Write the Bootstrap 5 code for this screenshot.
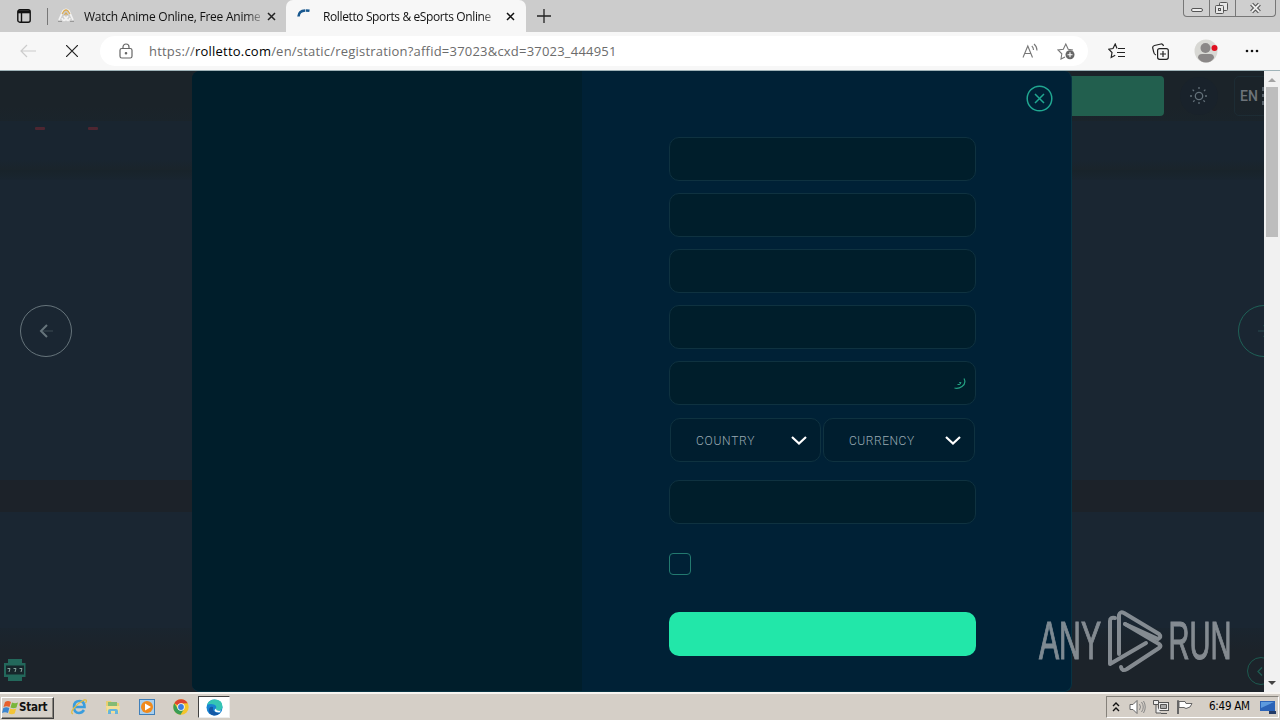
<!DOCTYPE html>
<html lang="en">
<head>
<meta charset="utf-8">
<title>Rolletto Sports &amp; eSports Online</title>
<link rel="stylesheet" href="https://cdn.jsdelivr.net/npm/bootstrap@5.3.0/dist/css/bootstrap.min.css">
<script src="https://cdn.jsdelivr.net/npm/bootstrap@5.3.0/dist/js/bootstrap.bundle.min.js"></script>
<style>
  body { width: 1280px; height: 720px; font-family: "Open Sans", "Noto Sans", sans-serif; font-size: 12px; color: #111; }
  svg { display: block; flex: none; }
  .tabstrip { height: 32px; background: #ccc; }
  .tab-idle { width: 236px; padding-left: 8px; border-left: 1px solid #777; height: 17px; }
  .tab-live { width: 240px; height: 32px; background: #f7f7f7; border-radius: 7px 7px 0 0; padding-left: 11px; }
  .tab-label { line-height: 17px; white-space: nowrap; letter-spacing: -.24px; }
  .tab-label-live { letter-spacing: -.38px; }
  .fade-end { -webkit-mask-image: linear-gradient(90deg, #000 92%, rgba(0,0,0,.3)); mask-image: linear-gradient(90deg, #000 92%, rgba(0,0,0,.3)); }
  .win-btns { width: 93px; height: 17px; border: 1px solid #777; border-top: 0; border-radius: 0 0 4px 4px; margin-right: 4px; background: #cfcfcf; }
  .win-btns > * + * { border-left: 1px solid #777; }
  .toolbar-row { height: 39px; background: #f7f7f7; border-bottom: 1px solid #9fb3b8; }
  .address { width: 988px; height: 30px; background: #fff; border-radius: 15px; margin-left: 20px; padding-left: 18px; }
  .url-text { font-size: 13px; color: #6c6c6c; letter-spacing: .21px; white-space: nowrap; padding-top: 1px; }
  .url-text b { font-weight: 400; color: #000; }
  .viewport { height: 621px; }
  .site { width: 1264px; background: #1c2229; }
  .site-head { height: 50px; padding: 5px 0 0; background: linear-gradient(#1b2329 70%, #1a242b); }
  .cta { width: 160px; height: 40px; border-radius: 4px; background: #225f4e; }
  .round-tool { width: 38px; height: 38px; border-radius: 50%; background: #19222b; margin: 1px 0 0 16px; }
  .lang { width: 42px; height: 40px; border: 1px solid #1d2c34; border-radius: 5px; font: 500 14px Roboto, sans-serif; color: #6d737a; margin-left: 16px; padding-left: 5px; margin-right: -12px; letter-spacing: .2px; }
  .ticker { height: 49px; background: linear-gradient(#192530 80%, #1a242b); padding: 6px 0 0 35px; gap: 43px; }
  .ticker i { width: 10px; height: 3px; background: #4e2631; border-radius: 1px; }
  .ticker-gap { height: 10px; background: linear-gradient(#18232a, #192530); }
  .hero { height: 300px; background: #1a2632; padding-top: 2px; }
  .circle { width: 52px; height: 52px; border: 1px solid #66747b; border-radius: 50%; }
  .circle-teal { border-color: #1f6157; }
  .games { height: 116px; margin-top: 32px; background: #1a2632; }
  .games-end { height: 64px; background: linear-gradient(#1a252f, #1c232a 35%); }
  .modal-panel { width: 880px; height: 621px; border-radius: 8px; background: #002136; border: 1px solid #073343; border-left: 0; border-top: 0; overflow: hidden; }
  .art { width: 390px; background: #001e2b; }
  .form-side { padding: 66px 0 0 87px; }
  .signup { width: 307px; }
  .field { height: 44px; border: 1px solid #0f3240; border-radius: 10px; background: #001e2b; margin-bottom: 12px; }
  .pick { height: 44px; border: 1px solid #0f3240; border-radius: 10px; background: #001e2f; font: 300 12px Roboto, sans-serif; color: #9aabb3; padding: 1px 13px 0 25px; }
  .picks { margin: 13px 1px 18px; gap: 2px; }
  .tick { width: 22px; height: 22px; border: 1px solid #23796f; border-radius: 4px; margin-top: 29px; }
  .submit { height: 44px; border-radius: 10px; background: #22e7a9; margin-top: 37px; }
  .closer { top: 14px; right: 18px; }
  .sbar { width: 16px; background: #f1f1f1; }
  .thumb { width: 12px; height: 150px; background: #bdbdbd; margin-top: 2px; }
  .watermark { right: 46px; bottom: 19px; }
  .corner-bubble { right: -11px; bottom: 7px; width: 28px; height: 28px; border: 1px solid #1d5a50; border-radius: 50%; }
  .slots { left: 3px; bottom: 10px; }
  .edge-l { left: 20px; } .edge-r { right: -26px; }
  .taskbar { height: 28px; background: #d5cfc7; border-top: 2px solid #f7f5f1; font-family: "DejaVu Sans Condensed", sans-serif; }
  .start { width: 53px; height: 22px; border: 1px solid; border-color: #fff #404040 #404040 #fff; box-shadow: inset -1px -1px #8a867e; font-weight: 700; font-size: 11.5px; letter-spacing: -.25px; margin: 1px 0 0 1px; }
  .dock { gap: 18px; margin-left: 17px; }
  .dock-live { width: 32px; height: 22px; background: #fff; border: 1px solid #404040; border-right-color: #eee; border-bottom-color: #eee; margin-left: -9px; }
  .tray { width: 173px; height: 22px; border: 1px solid; border-color: #85817a #fff #fff #85817a; margin-right: 1px; font-size: 11.5px; letter-spacing: -.25px; color: #000; }
</style>
</head>
<body class="overflow-hidden d-flex flex-column">

<!-- browser tabs -->
<header class="tabstrip d-flex flex-shrink-0">
  <div class="d-flex align-items-center" style="width:47px;padding-left:17px">
    <svg width="14" height="14" viewBox="0 0 14 14" fill="none" stroke="#111" stroke-width="1.4"><rect x=".8" y=".8" width="12.4" height="12.4" rx="2"/><path d="M1 2.8h12" stroke-width="3"/><path d="M4.5 4v9"/></svg>
  </div>
  <div class="d-flex align-items-center">
    <div class="tab-idle d-flex align-items-center">
      <svg width="20" height="16" viewBox="0 0 20 16" fill="none"><path d="M3 12 7 3q3-3 6 0l4 9M6 10q1 4 4 1 3 3 4-1M8 8l2 3 2-3" stroke="#f2f2f2" stroke-width="1.800"/><path d="m6 6 2-3q2-2 4 0l2 3M8.500 7l1.500-2 1.500 2" stroke="#dba94f" stroke-width="1.200"/><path d="M2 13.500h4m8 0h4" stroke="#999"/></svg>
      <span class="tab-label fade-end" style="width:176px;margin-left:8px">Watch Anime Online, Free Anime</span>
      <svg width="9" height="9" viewBox="0 0 9 9" class="ms-auto" style="margin-right:7px" stroke="#222" stroke-width="1.5"><path d="m1 1 7 7M8 1 1 8"/></svg>
    </div>
  </div>
  <div class="tab-live d-flex align-items-center" style="margin-left:3px">
    <svg width="16" height="16" viewBox="0 0 16 16" fill="none" stroke="#18588f" stroke-width="2.600"><path d="M1.500 8.500Q2 1 12.500 2.800" stroke-dasharray="10 .7"/></svg>
    <span class="tab-label tab-label-live fade-end" style="width:172px;margin-left:10px">Rolletto Sports &amp; eSports Online</span>
    <svg width="9" height="9" viewBox="0 0 9 9" style="margin-left:11px" stroke="#111" stroke-width="1.5"><path d="m1 1 7 7M8 1 1 8"/></svg>
  </div>
  <svg width="14" height="14" viewBox="0 0 14 14" style="margin:9px 0 0 11px" stroke="#222" stroke-width="1.3"><path d="M7 0v14M0 7h14"/></svg>
  <div class="win-btns d-flex ms-auto">
    <svg width="25" height="16" fill="none" stroke="#555"><rect x="7.5" y="8.500" width="11" height="3" rx="1.5" fill="#eee"/></svg>
    <svg width="26" height="16" fill="#e6e6e6" stroke="#555"><rect x="9.500" y="2.500" width="8" height="8" rx="1"/><rect x="5.500" y="5.500" width="8" height="8" rx="1"/><rect x="8.500" y="8.500" width="2" height="2"/></svg>
    <svg width="40" height="16" viewBox="0 0 40 16"><path d="m16 4 8 8m0-8-8 8" stroke="#555" stroke-width="4.200"/><path d="m16 4 8 8m0-8-8 8" stroke="#eee" stroke-width="2"/></svg>
  </div>
</header>

<!-- address bar -->
<nav class="toolbar-row d-flex align-items-center flex-shrink-0">
  <svg width="16" height="14" viewBox="0 0 16 14" style="margin-left:20px" fill="none" stroke="#ccc" stroke-width="1.2"><path d="M16 7H1m6-6L1 7l6 6"/></svg>
  <svg width="12" height="12" viewBox="0 0 12 12" style="margin-left:30px;margin-right:2px" stroke="#222" stroke-width="1.2"><path d="m0 0 12 12M12 0 0 12"/></svg>
  <div class="address d-flex align-items-center">
    <svg width="16" height="16" viewBox="0 0 16 16" fill="none" stroke="#666" stroke-width="1.2"><rect x="2" y="5.500" width="12" height="9.500" rx="1.800"/><path d="M5 5.500V4a3 3 0 0 1 6 0v1.500"/><circle cx="8" cy="10.300" r=".7" fill="#666"/></svg>
    <span class="url-text" style="margin-left:15px">https://<b>rolletto.com</b>/en/static/registration?affid=37023&amp;cxd=37023_444951</span>
    <svg width="17" height="16" viewBox="0 0 17 16" class="ms-auto" style="margin-right:18px" fill="none" stroke="#777" stroke-width="1.100"><path d="M1 14.500 5.800 3l4.700 11.500M2.700 10.500h6.200M9.800 3q1.700 1.500 1.700 4M12 1q3 2.500 3 6.500"/></svg>
    <svg width="18" height="18" viewBox="0 0 18 18" style="margin-right:13px" fill="none" stroke="#777" stroke-width="1.100"><path d="M8 15 4 17l.8-5.200L1 8l5.300-.8L8.800 2l2.400 5.200L16 8"/><circle cx="13" cy="12.800" r="4.500" fill="#666" stroke="none"/><path d="M13 10.300v5m-2.500-2.500h5" stroke="#fff"/></svg>
  </div>
  <svg width="17" height="16" viewBox="0 0 17 16" style="margin-left:20px" fill="none" stroke="#222" stroke-width="1.200"><path d="M9 5.500 7.200 1 5 5.500.7 6.200 4 9.500l-.8 5 4-2.200M10 5.500h7M9 9.500h8M10 13.500h7"/></svg>
  <svg width="17" height="17" viewBox="0 0 17 17" style="margin-left:27px" fill="none" stroke="#222" stroke-width="1.200"><path d="M4 12Q2 11.500 1.700 9L.7 5Q.5 3 2.500 2.500L9 1q2-.3 2.500 2"/><rect x="5.600" y="5.600" width="10.700" height="10.700" rx="2"/><path d="M11 8v6m-3-3h6"/></svg>
  <svg width="24" height="24" viewBox="0 0 24 24" style="margin-left:25px"><circle cx="12" cy="12" r="11.500" fill="#d8d8d4"/><circle cx="11.500" cy="9" r="5" fill="#8a8787"/><path d="M4 19q0-4 4-4h8q4 0 4 4-3 4.500-8 4.500T4 19" fill="#8a8787"/><circle cx="20.500" cy="9" r="3" fill="#e01020"/></svg>
  <svg width="14" height="4" viewBox="0 0 14 4" style="margin-left:27px" fill="#111"><circle cx="2" cy="2" r="1.300"/><circle cx="7" cy="2" r="1.300"/><circle cx="12" cy="2" r="1.300"/></svg>
</nav>

<!-- page -->
<main class="viewport d-flex flex-shrink-0 position-relative">
  <div class="site position-relative overflow-hidden">
    <div class="site-head d-flex justify-content-end">
      <div class="cta"></div>
      <div class="round-tool d-flex align-items-center justify-content-center">
        <svg width="20" height="20" viewBox="0 0 20 20" fill="none" stroke="#64717a" stroke-width="1.300"><circle cx="10" cy="10" r="3.700"/><path d="M10 1v3m0 12v3M1 10h3m12 0h3M3.600 3.600l2 2m8.800 8.800 2 2m0-12.800-2 2m-8.800 8.800-2 2" stroke-dasharray="2 1"/></svg>
      </div>
      <div class="lang d-flex align-items-center">EN<span style="border-left:3px dotted #566069;height:18px;margin-left:4px"></span></div>
    </div>
    <div class="ticker d-flex"><i></i><i></i></div>
    <div class="ticker-gap"></div>
    <div class="hero d-flex align-items-center position-relative">
      <div class="circle position-absolute edge-l d-flex align-items-center justify-content-center">
        <svg width="16" height="16" viewBox="0 0 16 16" fill="none"><path d="M5 8h10" stroke="#3c4b52"/><path d="M9 2 3 8l6 6" stroke="#66747b" stroke-width="2"/></svg>
      </div>
      <div class="circle circle-teal position-absolute edge-r d-flex align-items-center justify-content-center">
        <svg width="14" height="14" viewBox="0 0 14 14" fill="none"><path d="M1 7h10" stroke="#284a50"/><path d="m7 1 6 6-6 6" stroke="#1f6157" stroke-width="2"/></svg>
      </div>
    </div>
    <div class="games"></div>
    <div class="games-end"></div>
    <div class="slots position-absolute">
      <svg width="24" height="24" viewBox="0 0 24 24"><path d="M5 1h14v4h3.500v14H19v4H5v-4H1V5h4z" fill="#23685b"/><path d="M3 7.500h18v9H3z" fill="#17262b"/><g fill="none" stroke="#87a29c"><path d="M4.500 10.500H7L6 14M10.500 10.500H13L12 14M16.500 10.500H19L18 14"/></g></svg>
    </div>
    <div class="corner-bubble position-absolute d-flex align-items-center" style="padding-left:9px">
      <svg width="6" height="9" viewBox="0 0 6 9" fill="none" stroke="#1d5a50" stroke-width="1.300"><path d="M5 .5 1 4.500l4 4"/></svg>
    </div>

    <div class="position-absolute top-0 start-0 w-100 d-flex justify-content-center">
      <div class="modal-panel d-flex position-relative">
        <div class="art flex-shrink-0"></div>
        <div class="form-side">
          <form class="signup">
            <div class="field"></div><div class="field"></div><div class="field"></div><div class="field"></div>
            <div class="field mb-0 d-flex align-items-center justify-content-end" style="padding-right:9px">
              <svg width="14" height="14" viewBox="0 0 14 14" fill="none" stroke="#23a283"><path d="M12 2.500q2.500 5-2 8-3.500 2.500-7.500 1.500" stroke-width="1.200"/><path d="M5.500 8.500q3 1 3.500-2l-2 .3"/></svg>
            </div>
            <div class="picks d-flex">
              <div class="pick d-flex align-items-center justify-content-between" style="width:151px"><span style="letter-spacing:.75px">COUNTRY</span><svg width="16" height="9" viewBox="0 0 16 9" fill="none" stroke="#fff" stroke-width="2.200"><path d="m1 1 7 6.500L15 1"/></svg></div>
              <div class="pick d-flex align-items-center justify-content-between" style="width:152px"><span style="letter-spacing:.55px">CURRENCY</span><svg width="16" height="9" viewBox="0 0 16 9" fill="none" stroke="#fff" stroke-width="2.200"><path d="m1 1 7 6.500L15 1"/></svg></div>
            </div>
            <div class="field mb-0"></div>
            <div class="tick"></div>
            <div class="submit"></div>
          </form>
        </div>
        <div class="closer position-absolute">
          <svg width="27" height="27" viewBox="0 0 27 27" fill="none" stroke="#20a791" stroke-width="1.500"><circle cx="13.500" cy="13.500" r="12.300"/><path d="m9 9 9 9m0-9-9 9"/></svg>
        </div>
      </div>
    </div>
  </div>

  <div class="sbar d-flex flex-column align-items-center">
    <svg width="16" height="14" fill="#a3a3a3"><path d="m4 11 4-4 4 4z"/></svg>
    <div class="thumb"></div>
    <svg width="16" height="17" class="mt-auto" fill="#444"><path d="m4 6 4 4 4-4z"/></svg>
  </div>

  <div class="watermark position-absolute">
    <svg width="200" height="64" viewBox="0 0 200 64" overflow="visible" opacity=".78" style="color:#a2a8ad">
      <g fill="currentColor" stroke="currentColor" stroke-width="1.200" font-family="Liberation Sans, sans-serif" font-size="53">
        <text x="5" y="50" textLength="62" lengthAdjust="spacingAndGlyphs">ANY</text>
        <text x="134.500" y="50" textLength="63" lengthAdjust="spacingAndGlyphs">RUN</text>
      </g>
      <g transform="translate(2 1)" fill="none" stroke="currentColor" stroke-width="4" stroke-linejoin="round" stroke-linecap="round">
        <path d="M79 8q-5-1-5 3v43l36-21"/>
        <path d="M83 44V5q1-4 5-2l35 21q3 3-1 5L89 14"/>
        <path d="m89 14 34 20q3 2 0 4L91 59q-5 3-6-2"/>
      </g>
    </svg>
  </div>
</main>

<!-- taskbar -->
<footer class="taskbar d-flex align-items-center">
  <div class="start d-flex align-items-center">
    <svg width="17" height="17" viewBox="0 0 17 17"><path d="M3 3q3-2 6 0L7.500 8q-3-1.500-6 0z" fill="#e8602c"/><path d="M10 3.500q3 1.500 6 0l-1.500 5q-3 1.500-6 0z" fill="#79b63c"/><path d="M1.300 9q3-1.500 6 0L6 14q-3-1.500-6 0z" fill="#3c86d0"/><path d="M8.200 9.500q3 1.500 6 0l-1.500 5q-3 1.500-6 0z" fill="#f3c437"/></svg>
    <span>Start</span>
  </div>
  <div class="dock d-flex align-items-center">
    <svg width="16" height="16" viewBox="0 0 16 16" fill="none"><path d="M13 11q-2 3-5 3-5 0-5-6t5.500-6q5 0 5 6H4" stroke="#3a9ddd" stroke-width="2.600"/><path d="M2 15q-3-1 1-6T13 1q4-1 1.500 3" stroke="#e3bd40" stroke-width="1.300"/></svg>
    <svg width="16" height="16" viewBox="0 0 16 16"><path d="M1 2h5l1 2h7v8H1z" fill="#e9cf72"/><path d="M3 3h9v4H3z" fill="#83bb75"/><path d="M1 7h14l-1 7H2z" fill="#f3df96"/><path d="M3 15v-3q0-2 2-2h6q2 0 2 2v3h-3v-3H6v3z" fill="#66b5dc"/></svg>
    <svg width="16" height="16" viewBox="0 0 16 16"><rect x=".5" y=".5" width="15" height="15" fill="#a8cfee" stroke="#3f7fb9"/><circle cx="8" cy="8" r="6" fill="#f08a1c"/><path d="m6 4.500 6 3.500-6 3.500z" fill="#fff"/></svg>
    <svg width="16" height="16" viewBox="0 0 16 16"><circle cx="8" cy="8" r="7.700" fill="#f4c52b"/><path d="M8 8 1.300 4.200A7.700 7.700 0 0 1 14.700 4.200L8 4.500z" fill="#dc4433"/><path d="M1.300 4.200A7.700 7.700 0 0 0 7.500 15.700L11 10 5 10z" fill="#3a9d55"/><circle cx="8" cy="8" r="3.700" fill="#fff"/><circle cx="8" cy="8" r="2.900" fill="#3c7de0"/></svg>
    <div class="dock-live d-flex align-items-center justify-content-center">
      <svg width="17" height="17" viewBox="0 0 17 17"><circle cx="8.500" cy="8.500" r="8" fill="#1884d2"/><path d="M1 6q2-5.500 7.500-5.500 8 0 8 7 0 4-4.500 4-3 0-2-2 1-3-2-4-4-1-7 .5" fill="#35c5b4"/><path d="M7 8q-1 6 7 6-3 3-6.500 2.500Q2 15 3 10q1-3 4-2" fill="#1559a6"/><path d="M10 9.500q0 3 5 2l-1.500 2q-5 0-5-2.500z" fill="#fff"/></svg>
    </div>
  </div>
  <div class="tray d-flex align-items-center ms-auto">
    <svg width="8" height="12" viewBox="0 0 8 12" style="margin-left:5px" fill="none" stroke="#111" stroke-width="1.400"><path d="m1 5 3-3 3 3M1 10l3-3 3 3"/></svg>
    <svg width="17" height="16" viewBox="0 0 17 16" style="margin-left:9px" fill="#fff" stroke="#666"><path d="M1 5.500h3l4-4v13l-4-4H1z"/><path d="M10.500 5q2 3 0 6M12.500 3q3.500 5 0 10M14.500 2q3.500 6 0 12" fill="none" stroke="#888"/></svg>
    <svg width="16" height="16" viewBox="0 0 16 16" style="margin-left:7px" fill="#eee" stroke="#555"><rect x="5.500" y="3.500" width="10" height="8"/><path d="M7.500 5.500h6v4h-6z" fill="#aaa"/><path d="M8 14.500h6M.5 1.500h5v4h-5zM3 6v8h5" /></svg>
    <svg width="17" height="16" viewBox="0 0 17 16" style="margin-left:7px" fill="#fff" stroke="#666"><path d="M1.500 15V1.500h1V15M3 2.500h6l1 2h6L14 8l-4 1.500-2-1H3z"/></svg>
    <span style="margin-left:16px">6:49 AM</span>
    <svg width="16" height="14" viewBox="0 0 16 14" class="ms-auto" style="margin-right:2px"><path d="M0 1h15v10H0z" fill="#2b63b7"/><path d="M1 2h13L1 8z" fill="#5c9ade"/><path d="M9 11h7v3H9z" fill="#223a66"/></svg>
  </div>
</footer>
</body>
</html>
